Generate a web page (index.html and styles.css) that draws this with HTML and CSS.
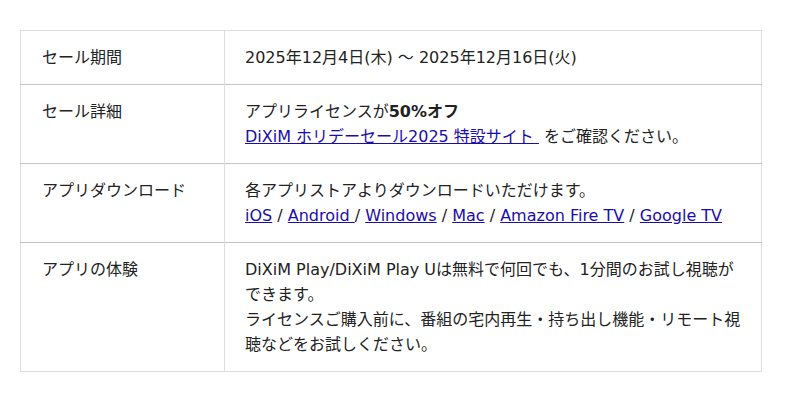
FILE: index.html
```html
<!DOCTYPE html>
<html lang="ja">
<head>
<meta charset="utf-8">
<link rel="stylesheet" href="styles.css">
</head>
<body>
<table class="sale">
  <tr>
    <th>セール期間</th>
    <td>2025年12月4日(木) 〜 2025年12月16日(火)</td>
  </tr>
  <tr>
    <th>セール詳細</th>
    <td>アプリライセンスが<b>50%オフ</b><br><a href="#">DiXiM ホリデーセール2025 特設サイト&nbsp;</a> をご確認ください。</td>
  </tr>
  <tr>
    <th>アプリダウンロード</th>
    <td>各アプリストアよりダウンロードいただけます。<br><a href="#">iOS</a> / <a href="#">Android </a>/ <a href="#">Windows</a> / <a href="#">Mac</a> / <a href="#">Amazon Fire TV</a> / <a href="#">Google TV</a></td>
  </tr>
  <tr>
    <th>アプリの体験</th>
    <td>DiXiM Play/DiXiM Play Uは無料で何回でも、1分間のお試し視聴ができます。<br>ライセンスご購入前に、番組の宅内再生・持ち出し機能・リモート視聴などをお試しください。</td>
  </tr>
</table>
</body>
</html>
```
FILE: styles.css
```css
html, body {
  margin: 0;
  background: #fff;
}
body {
  padding: 30px 38px 0 20px;
  font-family: "DejaVu Sans", "Noto Sans CJK JP", sans-serif;
  font-size: 16px;
  line-height: 25px;
  color: #222;
}
.sale {
  border-collapse: collapse;
  width: 742px;
  border: 1px solid #ddd;
}
.sale th, .sale td {
  text-align: left;
  vertical-align: top;
  font-weight: normal;
  padding: 14px 17px 14px 20px;
  border-top: 1px solid #c4c4c4;
}
.sale tr:first-child th, .sale tr:first-child td {
  border-top: 1px solid #ddd;
}
.sale th {
  width: 165px;
  padding-left: 21px;
  border-right: 1px solid #ddd;
}
.sale a {
  color: #1a0dab;
  text-decoration: underline;
}
.sale b {
  font-weight: bold;
}
```
